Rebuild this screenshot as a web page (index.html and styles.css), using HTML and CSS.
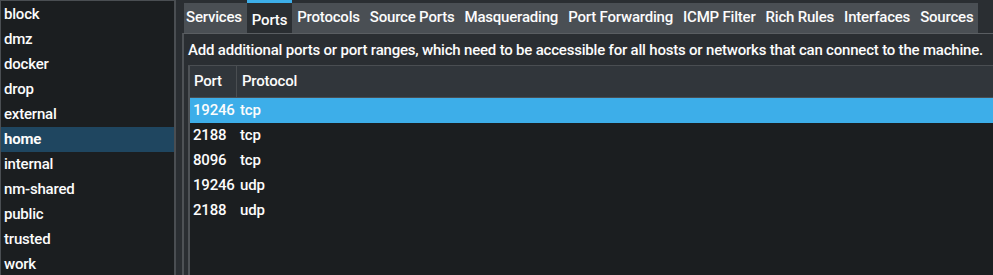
FILE: index.html
```html
<!DOCTYPE html>
<html>
<head>
<meta charset="utf-8">
<link rel="stylesheet" href="styles.css">
</head>
<body>
<div class="app">
  <ul class="zones">
    <li>block</li>
    <li>dmz</li>
    <li>docker</li>
    <li>drop</li>
    <li>external</li>
    <li class="sel">home</li>
    <li>internal</li>
    <li>nm-shared</li>
    <li>public</li>
    <li>trusted</li>
    <li>work</li>
  </ul>
  <div class="right">
    <div class="tabs">
      <div class="tab">Services</div>
      <div class="tab active">Ports</div>
      <div class="tab">Protocols</div>
      <div class="tab">Source Ports</div>
      <div class="tab">Masquerading</div>
      <div class="tab">Port Forwarding</div>
      <div class="tab">ICMP Filter</div>
      <div class="tab">Rich Rules</div>
      <div class="tab">Interfaces</div>
      <div class="tab">Sources</div>
    </div>
    <div class="pane">
      <div class="desc">Add additional ports or port ranges, which need to be accessible for all hosts or networks that can connect to the machine.</div>
      <div class="table">
        <div class="head">
          <div class="c1">Port</div>
          <div class="c2">Protocol</div>
        </div>
        <div class="row sel"><div class="c1">19246</div><div class="c2">tcp</div></div>
        <div class="row"><div class="c1">2188</div><div class="c2">tcp</div></div>
        <div class="row"><div class="c1">8096</div><div class="c2">tcp</div></div>
        <div class="row"><div class="c1">19246</div><div class="c2">udp</div></div>
        <div class="row"><div class="c1">2188</div><div class="c2">udp</div></div>
      </div>
    </div>
  </div>
</div>
</body>
</html>
```

FILE: styles.css
```css
* { box-sizing: border-box; }
html, body {
  margin: 0;
  padding: 0;
  width: 993px;
  height: 275px;
  overflow: hidden;
  background: #2a2e32;
  font-family: Roboto, "Noto Sans", sans-serif;
  font-size: 15px;
  letter-spacing: -0.2px;
  font-weight: 500;
  color: #fcfcfc;
}
.app {
  display: flex;
  height: 275px;
  overflow: hidden;
}
.zones {
  list-style: none;
  margin: 0;
  padding: 1px 0 0 0;
  width: 176px;
  height: 290px;
  background: #1b1e20;
  border-left: 1px solid #4a4e52;
  border-top: 1px solid #4a4e52;
  border-right: 2px solid #4a4e52;
  flex: none;
}
.zones li {
  height: 25px;
  line-height: 25px;
  padding-left: 3px;
}
.zones li.sel {
  background: #1f4660;
  font-weight: bold;
}
.right {
  margin-left: 6px;
  flex: 1;
  display: flex;
  flex-direction: column;
  min-width: 0;
}
.tabs {
  display: flex;
  height: 33px;
  padding-left: 2px;
  align-items: flex-end;
  flex: none;
}
.tab {
  height: 30px;
  line-height: 28px;
  padding: 0 5px;
  background: #4a4f54;
  white-space: nowrap;
}
.tab:first-child {
  padding-left: 2px;
}
.tab.active {
  height: 33px;
  line-height: 34px;
  background: #2a2e32;
  border-top: 3px solid #3daee9;
}
.pane {
  flex: 1;
  border-top: 1px solid #5a5e62;
  border-left: 2px solid #4e5256;
  padding: 4px 0 0 4px;
  display: flex;
  flex-direction: column;
}
.desc {
  height: 27px;
  line-height: 24px;
  white-space: nowrap;
}
.table {
  flex: 1;
  background: #1b1e20;
  border-top: 1px solid #4a4e52;
  border-left: 2px solid #4e5256;
}
.head {
  display: flex;
  height: 32px;
  line-height: 31px;
  background: #31363b;
  border-bottom: 1px solid #4a4e52;
}
.head .c1 {
  width: 47px;
  padding-left: 4px;
  border-right: 1px solid #4a4e52;
}
.head .c2 {
  padding-left: 5px;
}
.row {
  display: flex;
  height: 25px;
  line-height: 25px;
}
.row .c1 {
  width: 48px;
  padding-left: 3px;
}
.row .c2 {
  padding-left: 2px;
}
.row.sel {
  background: #3daee9;
}
```
